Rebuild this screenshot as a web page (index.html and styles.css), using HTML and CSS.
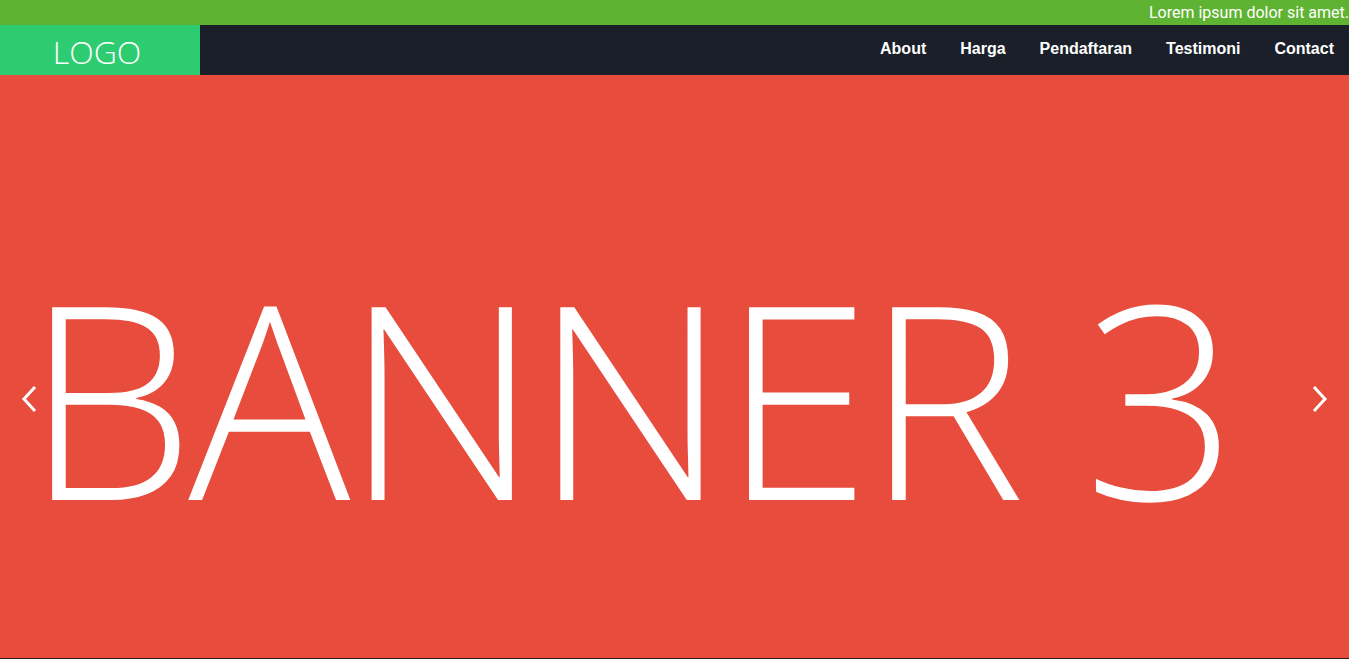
FILE: index.html
```html
<!DOCTYPE html>
<html>
<head>
<meta charset="utf-8">
<link rel="stylesheet" href="styles.css">
</head>
<body>
<div class="topbar">Lorem ipsum dolor sit amet.</div>
<header class="nav">
  <div class="logo">LOGO</div>
  <nav class="menu">
    <a href="#">About</a>
    <a href="#">Harga</a>
    <a href="#">Pendaftaran</a>
    <a href="#">Testimoni</a>
    <a href="#">Contact</a>
  </nav>
</header>
<section class="banner">
  <div class="banner-text">BANNER 3</div>
  <span class="arrow arrow-left"><svg width="18" height="28" viewBox="0 0 18 28"><path d="M15 2 L4 14 L15 26" fill="none" stroke="#fff" stroke-width="3"/></svg></span>
  <span class="arrow arrow-right"><svg width="18" height="28" viewBox="0 0 18 28"><path d="M3 2 L14 14 L3 26" fill="none" stroke="#fff" stroke-width="3"/></svg></span>
</section>
<div class="next"></div>
</body>
</html>
```
FILE: styles.css
```css
html, body { margin: 0; padding: 0; }
body { overflow: hidden; background: #2a1a14; }
.topbar {
  height: 25px;
  background: #5fb332;
  color: #fff;
  font-family: Roboto, "Liberation Sans", sans-serif;
  font-size: 16px;
  line-height: 25px;
  text-align: right;
}
.nav {
  height: 50px;
  background: #1a1f29;
  display: flex;
  justify-content: space-between;
  align-items: stretch;
}
.logo {
  width: 200px;
  background: #2ecc71;
  color: #fff;
  font-family: "Open Sans", sans-serif;
  font-weight: 300;
  font-size: 32px;
  display: flex;
  align-items: center;
  justify-content: center;
  padding-top: 2px;
  padding-right: 6px;
  box-sizing: border-box;
}
.menu {
  display: flex;
  align-items: center;
  padding-right: 15px;
  padding-bottom: 2px;
}
.menu a {
  color: #fff;
  text-decoration: none;
  font-family: "Liberation Sans", Arial, sans-serif;
  font-weight: bold;
  font-size: 16px;
  margin-left: 34px;
}
.banner {
  position: relative;
  height: 583px;
  background: #e74c3c;
  display: flex;
  align-items: center;
  padding-left: 25px;
  box-sizing: border-box;
}
.banner-text {
  color: #fff;
  font-family: "Open Sans", sans-serif;
  font-weight: 300;
  font-size: 270px;
  line-height: 1;
  letter-spacing: -6px;
  white-space: nowrap;
  margin-top: 56px;
}
.arrow {
  position: absolute;
  top: 310px;
  display: block;
  line-height: 0;
}
.arrow-left { left: 20px; }
.arrow-right { right: 20px; }
.next { height: 1px; background: #2a1a14; }
```
